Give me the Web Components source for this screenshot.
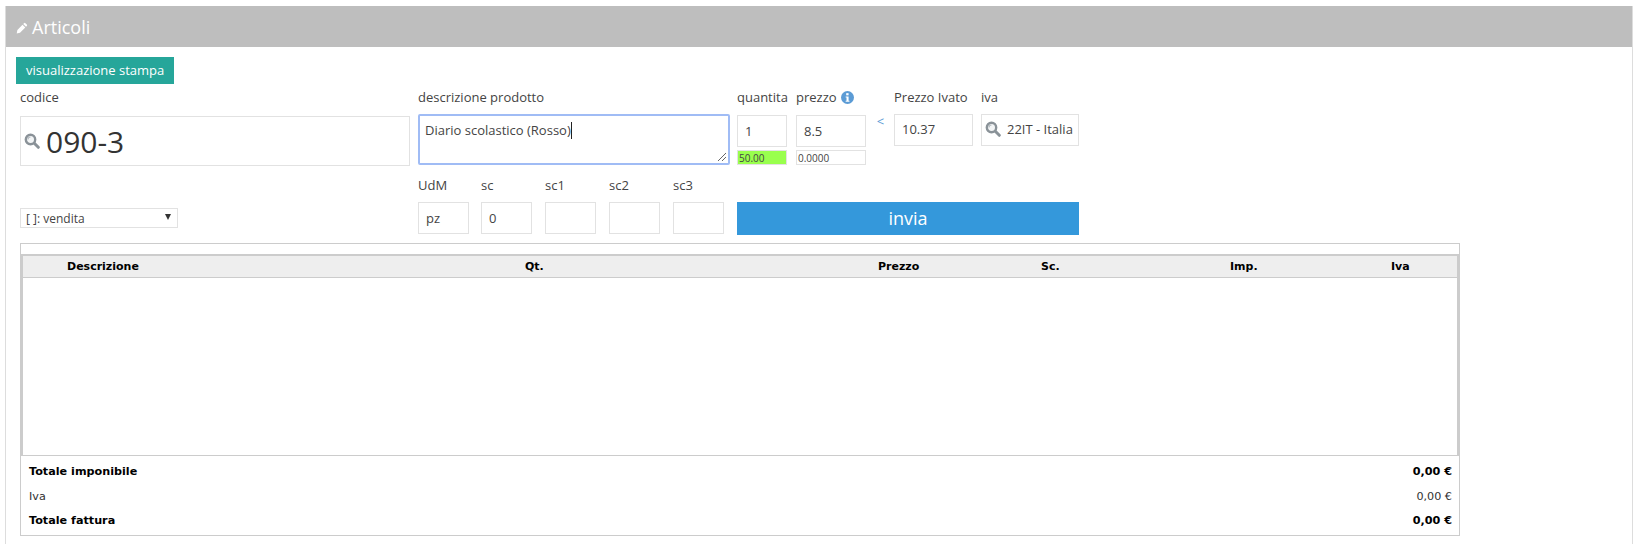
<!DOCTYPE html>
<html lang="it">
<head>
<meta charset="utf-8">
<title>Articoli</title>
<style>
  html, body { margin: 0; background: #fff; }
  body { font-family: 'Open Sans', sans-serif; font-size: 13px; color: #444; height: 544px; overflow: hidden; }
</style>
</head>
<body>
<article-panel title-text="Articoli">
  <print-button>visualizzazione stampa</print-button>
  <article-form></article-form>
  <invoice-table></invoice-table>
</article-panel>

<script>
const ICONS = {
  pencil: '<svg viewBox="0 0 12 12" width="12" height="12"><path fill="#fff" d="M8 1.200a1 1 0 0 1 1.400 0l1.400 1.400a1 1 0 0 1 0 1.400l-.8.800-2.800-2.800zM6.500 2.700l2.800 2.800-5.300 5.300-3.300.7.700-3.500z"/></svg>',
  search: '<svg viewBox="0 0 16 16" width="16" height="16"><circle cx="6.500" cy="6.500" r="4.700" fill="#f3f5f6" stroke="#8a9298" stroke-width="2.400"/><path d="M4 6.500a2.500 2.500 0 0 1 2.500-2.500" fill="none" stroke="#b4bbc0" stroke-width="1.200"/><path d="M10.300 10.300l4 4" stroke="#8a9298" stroke-width="3" stroke-linecap="round"/></svg>',
  info: '<svg viewBox="0 0 12 12" width="13" height="13"><circle cx="6" cy="6" r="6" fill="#5b9bd5"/><rect x="4.800" y="2" width="2.200" height="2" fill="#fff"/><path fill="#fff" d="M4.300 5h2.700v4h.8v1H4.300V9h.8V6h-.8z"/></svg>'
}

class ArticlePanel extends HTMLElement {
  constructor () {
    super()
    this.attachShadow({ mode: 'open' })
    this.shadowRoot.innerHTML = `
      <style>
        :host { display: block; margin: 6px 4px 0 5px; border-left: 1px solid #ddd; border-right: 1px solid #ddd; height: 538px; box-sizing: border-box; }
        header { display: flex; align-items: center; gap: 4px; height: 41px; padding-left: 10px; background: #bebebe; color: #fff; font-size: 18px; }
        header svg { margin-top: 3px; }
        main { padding: 10px 0 0 10px; }
      </style>
      <header>${ICONS.pencil}<span>${this.getAttribute('title-text')}</span></header>
      <main><slot></slot></main>
    `
  }
}

class PrintButton extends HTMLElement {
  constructor () {
    super()
    this.attachShadow({ mode: 'open' })
    this.shadowRoot.innerHTML = `
      <style>
        :host { display: block; width: max-content; padding: 0 10px; height: 27px; line-height: 27px; background: #26a69a; color: #fff; font-size: 13px; }
      </style>
      <slot></slot>
    `
  }
}

// label + box; width/height of the box come from attributes
class FormField extends HTMLElement {
  constructor () {
    super()
    this.attachShadow({ mode: 'open' })
    const w = this.getAttribute('w')
    this.shadowRoot.innerHTML = `
      <style>
        :host { display: block; width: ${w}px; }
        .lab { display: flex; align-items: center; gap: 4px; height: 18px; line-height: 18px; white-space: nowrap; }
        .box { box-sizing: border-box; display: flex; align-items: center; gap: ${this.getAttribute('inner') || 5}px; height: ${this.getAttribute('h') || 32}px;
          margin-top: ${this.getAttribute('gap') || 8}px; padding-left: ${this.getAttribute('pad') || 7}px; padding-bottom: ${this.getAttribute('lift') || 0}px;
          border: 1px solid #e2e2e2; background: #fff; white-space: nowrap; overflow: hidden; }
      </style>
      <div class="lab"><slot name="label"></slot></div>
      <div class="box"><slot></slot></div>
    `
  }
}

class ArticleForm extends HTMLElement {
  constructor () {
    super()
    this.attachShadow({ mode: 'open' })
    this.shadowRoot.innerHTML = `
      <style>
        :host { display: flex; padding: 4px 0 0 4px; width: 1063px; }
        span[slot=label] { display: flex; align-items: center; gap: 4px; }
        .left { width: 398px; flex: none; }
        .code { font-size: 30px; color: #333; }
        .select { box-sizing: border-box; display: flex; justify-content: space-between; align-items: center; width: 158px; height: 20px; margin-top: 42px;
          border: 1px solid #e2e2e2; padding: 0 6px 0 5px; font-size: 12px; }
        .select i { border-left: 3px solid transparent; border-right: 3px solid transparent; border-top: 6px solid #333; margin-top: -3px; }
        .right { flex: none; width: 661px; display: flex; flex-direction: column; gap: 11px; }
        .row { display: flex; align-items: flex-start; }
        .area { box-sizing: border-box; position: relative; width: 312px; height: 51px; margin-top: 8px; padding: 5px 5px; border: 2px solid #a0bcf5; border-radius: 2px; }
        .area b { display: inline-block; width: 1px; height: 17px; background: #222; vertical-align: -4px; }
        .area svg { position: absolute; right: 1px; bottom: 1px; }
        .small { box-sizing: border-box; height: 15px; margin-top: 3px; border: 1px solid #e2e2e2; font-size: 10px; line-height: 14px; padding-left: 1px; }
        .green { background: #99ff4d; }
        .lt { width: 28px; text-align: center; margin-top: 24px; color: #5b9bd5; font-size: 13px; line-height: 18px; padding-left: 1px; box-sizing: border-box; }
        .invia { box-sizing: border-box; width: 342px; height: 33px; margin-top: 26px; background: #3498db; color: #fff; font-size: 18px; line-height: 33px; text-align: center; }
      </style>
      <div class="left">
        <form-field w="390" h="50" gap="10" pad="3" inner="6"><span slot="label">codice</span>${ICONS.search}<span class="code">090-3</span></form-field>
        <div class="select"><span>[ ]: vendita</span><i></i></div>
      </div>
      <div class="right">
        <div class="row">
          <div style="width:319px">
            <div style="height:18px;line-height:18px">descrizione prodotto</div>
            <div class="area">Diario scolastico (Rosso)<b></b><svg width="10" height="10" viewBox="0 0 10 10"><path d="M1 9l8-8M5 9l4-4" stroke="#666" fill="none"/></svg></div>
          </div>
          <div style="width:50px;margin-right:9px">
            <form-field w="50" gap="9"><span slot="label">quantita</span>1</form-field>
            <div class="small green">50.00</div>
          </div>
          <div style="width:70px">
            <form-field w="70" gap="9"><span slot="label">prezzo ${ICONS.info}</span>8.5</form-field>
            <div class="small">0.0000</div>
          </div>
          <div class="lt">&lt;</div>
          <form-field w="79" gap="8" lift="3" style="margin-right:8px"><span slot="label">Prezzo Ivato</span>10.37</form-field>
          <form-field w="98" gap="8" pad="3" inner="6" lift="3"><span slot="label">iva</span>${ICONS.search}<span>22IT - Italia</span></form-field>
        </div>
        <div class="row" style="gap:13px">
          <form-field w="51" gap="8" style="margin-right:-1px"><span slot="label">UdM</span>pz</form-field>
          <form-field w="51" gap="8"><span slot="label">sc</span>0</form-field>
          <form-field w="51" gap="8"><span slot="label">sc1</span></form-field>
          <form-field w="51" gap="8"><span slot="label">sc2</span></form-field>
          <form-field w="51" gap="8"><span slot="label">sc3</span></form-field>
          <div class="invia">invia</div>
        </div>
      </div>
    `
  }
}

class InvoiceTable extends HTMLElement {
  constructor () {
    super()
    this.attachShadow({ mode: 'open' })
    const cols = ['Descrizione', 'Qt.', 'Prezzo', 'Sc.', 'Imp.', 'Iva']
    const totals = [['Totale imponibile', '0,00 €', true], ['Iva', '0,00 €', false], ['Totale fattura', '0,00 €', true]]
    this.shadowRoot.innerHTML = `
      <style>
        :host { display: block; box-sizing: border-box; width: 1440px; height: 293px; margin: 8px 0 0 4px; border: 1px solid #ccc; font-family: 'DejaVu Sans', Verdana, sans-serif; font-size: 11px; color: #000; }
        .grid { box-sizing: border-box; height: 202px; margin-top: 10px; border: 2px solid #ccc; border-bottom-width: 1px; }
        .head { display: grid; grid-template-columns: 458px 353px 163px 189px 161px 1fr; box-sizing: border-box; height: 22px; padding-left: 44px; align-items: center; font-weight: bold; background: #eee; border-bottom: 1px solid #ccc; }
        .tot { display: flex; flex-direction: column; padding: 4px 7px 0 8px; font-size: 11.2px; }
        .tot div { display: flex; justify-content: space-between; height: 24.5px; line-height: 24.5px; }
        .b { font-weight: bold; }
        .n { color: #333; }
      </style>
      <div class="grid"><div class="head">${cols.map(c => `<span>${c}</span>`).join('')}</div></div>
      <div class="tot">${totals.map(([l, v, b]) => `<div class="${b ? 'b' : 'n'}"><span>${l}</span><span>${v}</span></div>`).join('')}</div>
    `
  }
}

customElements.define('article-panel', ArticlePanel)
customElements.define('print-button', PrintButton)
customElements.define('form-field', FormField)
customElements.define('article-form', ArticleForm)
customElements.define('invoice-table', InvoiceTable)
</script>
</body>
</html>
